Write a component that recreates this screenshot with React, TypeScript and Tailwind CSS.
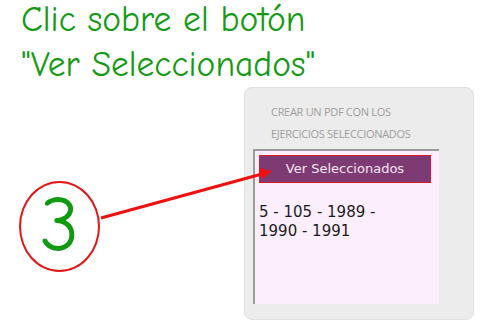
import React from 'react';

const comic = { fontFamily: '"Comic Sans MS", "Comic Neue", "DejaVu Sans", sans-serif' };

export default function App() {
  return (
    <div className="relative w-[497px] h-[333px] bg-white overflow-hidden">
      {/* Title */}
      <div
        className="pl-[21px] -mt-[3px] text-[35.5px] leading-[45px] text-[#169a16]"
        style={comic}
      >
        <div>Clic sobre el botón</div>
        <div>"Ver Seleccionados"</div>
      </div>

      <div className="flex items-start">
        {/* Step marker */}
        <div className="mt-[94px] ml-[19px] w-[81px] h-[91px] rounded-[50%] border-2 border-[#e51515] flex items-center justify-center">
          <span className="text-[78px] leading-none text-[#109a10] -mt-[2px]" style={comic}>
            3
          </span>
        </div>

        {/* Panel */}
        <div className="ml-[144px] w-[230px] h-[233px] bg-[#ececec] border border-[#e0e0e0] rounded-[8px] pt-[13px] pl-[8px]">
          <div
            className="pl-[18px] text-[11px] leading-[22px] font-medium text-[#9e9e9e] tracking-[-0.3px]"
            style={{ fontFamily: '"Open Sans", sans-serif' }}
          >
            <div>CREAR UN PDF CON LOS</div>
            <div>EJERCICIOS SELECCIONADOS</div>
          </div>
          <div
            className="mt-[4px] w-[186px] h-[155px] bg-[#fdeefd] border-l-2 border-t-2 border-[#9a9a9a] pt-[4px] pl-[4px]"
            style={{ fontFamily: '"DejaVu Sans", Verdana, sans-serif' }}
          >
            <div className="w-[172px] h-[28px] bg-[#7e3a73] border border-[#e0182a] flex items-center justify-center text-[13px] text-[#f5e8f3]">
              Ver Seleccionados
            </div>
            <div className="mt-[20px] text-[15px] leading-[19px] text-[#1c1c1c]">
              5 - 105 - 1989 -<br />1990 - 1991
            </div>
          </div>
        </div>
      </div>

      {/* Arrow overlay */}
      <svg className="absolute left-0 top-0 pointer-events-none" width="497" height="333">
        <line x1="101" y1="218" x2="262" y2="174" stroke="#f01010" strokeWidth="3" />
        <polygon points="272,171 259,168 262,179" fill="#f01010" />
      </svg>
    </div>
  );
}
